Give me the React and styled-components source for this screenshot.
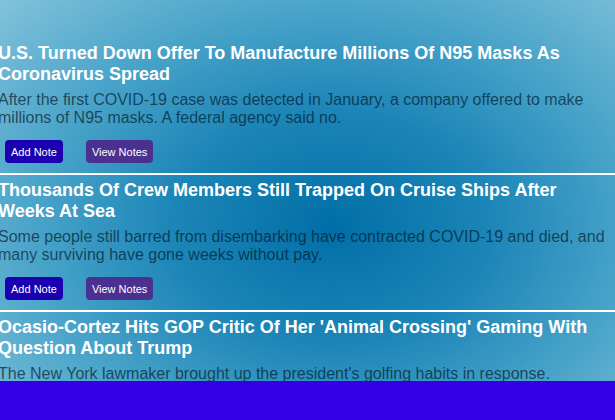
import React from 'react'
import styled, { createGlobalStyle } from 'styled-components'

const GlobalStyle = createGlobalStyle`
    html, body {
        margin: 0;
        padding: 0;
        height: 100%;
    }
    body {
        font-family: 'Liberation Sans', Arial, sans-serif;
        background: radial-gradient(ellipse 75% 80% at 54% 54%, #006ea6 0%, #1d86b8 35%, #4aa4c9 65%, #84c4dc 100%);
        background-attachment: fixed;
        overflow: hidden;
    }
`;

const List = styled.main`
    display: flex;
    flex-direction: column;
    padding-top: 43px;
    margin-left: -2px;
`;

const Article = styled.article`
    display: flex;
    flex-direction: column;
`;

const Title = styled.h2`
    margin: 0;
    font-size: 18px;
    line-height: 21px;
    font-weight: 700;
    color: #ffffff;
`;

const Description = styled.p`
    margin: 6px 0 0;
    font-size: 16px;
    line-height: 18px;
    color: rgba(0, 22, 40, 0.68);
`;

const Actions = styled.div`
    display: flex;
    flex-direction: row;
    gap: 23px;
    margin: 13px 0 0 7px;
`;

const Button = styled.button`
    height: 23px;
    padding: 0 6px;
    border: none;
    border-radius: 4px;
    background: ${props => props.$bg};
    color: #ffffff;
    font-family: 'Liberation Sans', Arial, sans-serif;
    font-size: 11px;
    cursor: pointer;
`;

const Divider = styled.hr`
    width: 100%;
    height: 2px;
    margin: 10px 0 5px;
    border: none;
    background: #ffffff;
`;

const Footer = styled.footer`
    position: fixed;
    left: 0;
    right: 0;
    bottom: 0;
    height: 39px;
    background: #3300e6;
`;

const articles = [
    {
        title: 'U.S. Turned Down Offer To Manufacture Millions Of N95 Masks As Coronavirus Spread',
        desc: 'After the first COVID-19 case was detected in January, a company offered to make millions of N95 masks. A federal agency said no.'
    },
    {
        title: 'Thousands Of Crew Members Still Trapped On Cruise Ships After Weeks At Sea',
        desc: 'Some people still barred from disembarking have contracted COVID-19 and died, and many surviving have gone weeks without pay.'
    },
    {
        title: "Ocasio-Cortez Hits GOP Critic Of Her 'Animal Crossing' Gaming With Question About Trump",
        desc: "The New York lawmaker brought up the president's golfing habits in response."
    }
];

export default function App(){
    return (
        <>
            <GlobalStyle />
            <List>
                {articles.map((a, i) => (
                    <Article key={i}>
                        <Title>{a.title}</Title>
                        <Description>{a.desc}</Description>
                        <Actions>
                            <Button $bg='#1a00b0'>Add Note</Button>
                            <Button $bg='#4a3090'>View Notes</Button>
                        </Actions>
                        <Divider />
                    </Article>
                ))}
            </List>
            <Footer />
        </>
    )
}
